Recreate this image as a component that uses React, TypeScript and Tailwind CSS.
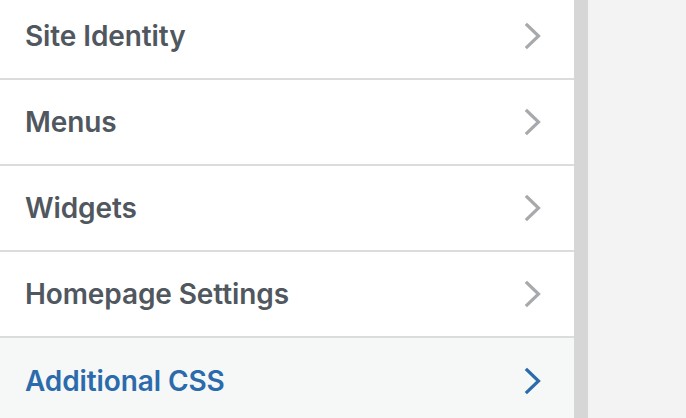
const items = [
  { label: 'Site Identity', active: false },
  { label: 'Menus', active: false },
  { label: 'Widgets', active: false },
  { label: 'Homepage Settings', active: false },
  { label: 'Additional CSS', active: true },
];

function Chevron({ className }: { className: string }) {
  return (
    <svg viewBox="0 0 18 28" className={className} fill="none" stroke="currentColor" strokeWidth={3.2} strokeLinecap="square">
      <path d="M3 3 L14.5 14 L3 25" />
    </svg>
  );
}

export default function App() {
  return (
    <div className="flex h-[418px] w-[686px] overflow-hidden bg-[#f3f3f3]" style={{ fontFamily: 'Inter, "Noto Sans", sans-serif' }}>
      <div className="w-[574px] shrink-0 bg-white">
        <ul className="-mt-[6px]">
          {items.map((item, i) => (
            <li
              key={item.label}
              className={
                'flex h-[86px] items-center justify-between pl-[25px] pr-[32px] ' +
                (i < items.length - 1 ? 'border-b-2 border-[#dcdcde] ' : '') +
                (item.active ? 'bg-[#f6f7f7] text-[#2c6bab]' : 'bg-white text-[#50575e]')
              }
            >
              <span className="text-[28px] font-semibold tracking-[-0.1px]">{item.label}</span>
              <Chevron className={'h-[28px] w-[18px] ' + (item.active ? 'text-[#2c6bab]' : 'text-[#a7aaad]')} />
            </li>
          ))}
        </ul>
      </div>
      <div className="w-[14px] shrink-0 bg-[#d6d6d6]" />
      <div className="flex-1 bg-[#f3f3f3]" />
    </div>
  );
}
